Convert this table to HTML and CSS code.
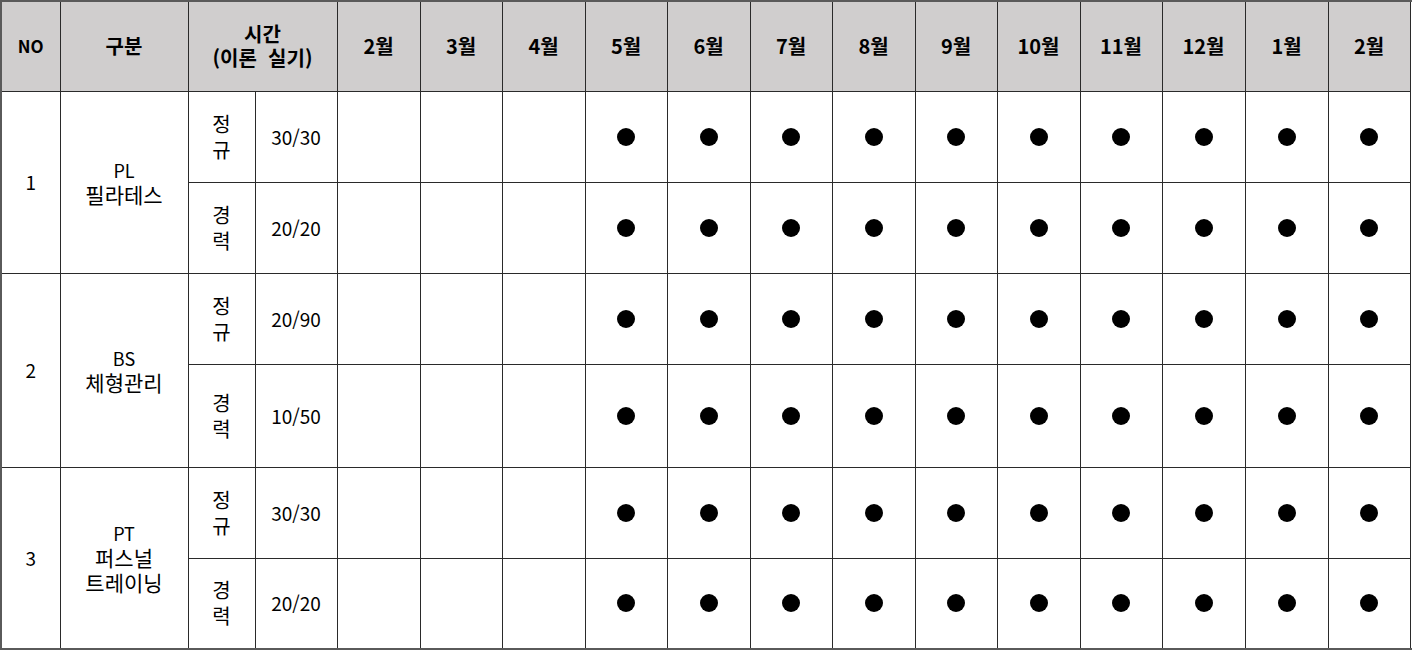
FILE: index.html
```html
<!DOCTYPE html>
<html lang="ko">
<head>
<meta charset="utf-8">
<title>교육 일정</title>
<link rel="stylesheet" href="styles.css">
</head>
<body>
<table class="sched">
  <colgroup>
    <col style="width:59px"><col style="width:128px"><col style="width:67px"><col style="width:82px">
    <col style="width:83px"><col style="width:82px"><col style="width:83px"><col style="width:82px">
    <col style="width:83px"><col style="width:82px"><col style="width:83px"><col style="width:82px">
    <col style="width:83px"><col style="width:82px"><col style="width:83px"><col style="width:83px">
    <col style="width:82px"><col style="width:81px">
  </colgroup>
  <thead>
    <tr class="hrow">
      <th class="no">NO</th>
      <th>구분</th>
      <th colspan="2">시간<br>(이론&nbsp; 실기)</th>
      <th>2월</th><th>3월</th><th>4월</th><th>5월</th><th>6월</th><th>7월</th><th>8월</th>
      <th>9월</th><th>10월</th><th>11월</th><th>12월</th><th>1월</th><th>2월</th>
    </tr>
  </thead>
  <tbody>
    <tr class="r">
      <td rowspan="2">1</td>
      <td rowspan="2" class="name">PL<br><span class="kr">필라테스</span></td>
      <td class="vt">정<br>규</td><td>30/30</td>
      <td></td><td></td><td></td>
      <td><span class="dot"></span></td><td><span class="dot"></span></td><td><span class="dot"></span></td><td><span class="dot"></span></td><td><span class="dot"></span></td><td><span class="dot"></span></td><td><span class="dot"></span></td><td><span class="dot"></span></td><td><span class="dot"></span></td><td><span class="dot"></span></td>
    </tr>
    <tr class="r">
      <td class="vt">경<br>력</td><td>20/20</td>
      <td></td><td></td><td></td>
      <td><span class="dot"></span></td><td><span class="dot"></span></td><td><span class="dot"></span></td><td><span class="dot"></span></td><td><span class="dot"></span></td><td><span class="dot"></span></td><td><span class="dot"></span></td><td><span class="dot"></span></td><td><span class="dot"></span></td><td><span class="dot"></span></td>
    </tr>
    <tr class="r">
      <td rowspan="2">2</td>
      <td rowspan="2" class="name">BS<br><span class="kr">체형관리</span></td>
      <td class="vt">정<br>규</td><td>20/90</td>
      <td></td><td></td><td></td>
      <td><span class="dot"></span></td><td><span class="dot"></span></td><td><span class="dot"></span></td><td><span class="dot"></span></td><td><span class="dot"></span></td><td><span class="dot"></span></td><td><span class="dot"></span></td><td><span class="dot"></span></td><td><span class="dot"></span></td><td><span class="dot"></span></td>
    </tr>
    <tr class="r tall">
      <td class="vt">경<br>력</td><td>10/50</td>
      <td></td><td></td><td></td>
      <td><span class="dot"></span></td><td><span class="dot"></span></td><td><span class="dot"></span></td><td><span class="dot"></span></td><td><span class="dot"></span></td><td><span class="dot"></span></td><td><span class="dot"></span></td><td><span class="dot"></span></td><td><span class="dot"></span></td><td><span class="dot"></span></td>
    </tr>
    <tr class="r">
      <td rowspan="2">3</td>
      <td rowspan="2" class="name">PT<br><span class="kr">퍼스널</span><br><span class="kr">트레이닝</span></td>
      <td class="vt">정<br>규</td><td>30/30</td>
      <td></td><td></td><td></td>
      <td><span class="dot"></span></td><td><span class="dot"></span></td><td><span class="dot"></span></td><td><span class="dot"></span></td><td><span class="dot"></span></td><td><span class="dot"></span></td><td><span class="dot"></span></td><td><span class="dot"></span></td><td><span class="dot"></span></td><td><span class="dot"></span></td>
    </tr>
    <tr class="r">
      <td class="vt">경<br>력</td><td>20/20</td>
      <td></td><td></td><td></td>
      <td><span class="dot"></span></td><td><span class="dot"></span></td><td><span class="dot"></span></td><td><span class="dot"></span></td><td><span class="dot"></span></td><td><span class="dot"></span></td><td><span class="dot"></span></td><td><span class="dot"></span></td><td><span class="dot"></span></td><td><span class="dot"></span></td>
    </tr>
  </tbody>
</table>
</body>
</html>
```

FILE: styles.css
```css
html, body {
  margin: 0;
  padding: 0;
  background: #ffffff;
}
body {
  font-family: "Noto Sans CJK KR", "Noto Sans", sans-serif;
  color: #000;
}
.sched {
  border-collapse: collapse;
  table-layout: fixed;
  width: 1409px;
  border: 2px solid #5a5a5a;
}
.sched th,
.sched td {
  border: 1px solid #2a2a2a;
  padding: 0;
  text-align: center;
  vertical-align: middle;
}
.sched th {
  background: #d0cece;
  font-weight: 700;
  font-size: 20px;
  line-height: 24px;
}
.sched th.no {
  font-size: 17px;
}
.hrow { height: 90px; }
.r { height: 91px; }
.r.tall { height: 103px; }
.sched td {
  font-size: 19px;
  line-height: 24px;
}
.sched td.name {
  font-size: 18px;
  line-height: 24px;
}
.sched td.name .kr {
  font-size: 21px;
}
.sched td.vt {
  font-size: 20px;
  line-height: 26px;
}
.dot {
  display: block;
  width: 18px;
  height: 18px;
  margin: 0 auto;
  border-radius: 50%;
  background: #000;
}
```
